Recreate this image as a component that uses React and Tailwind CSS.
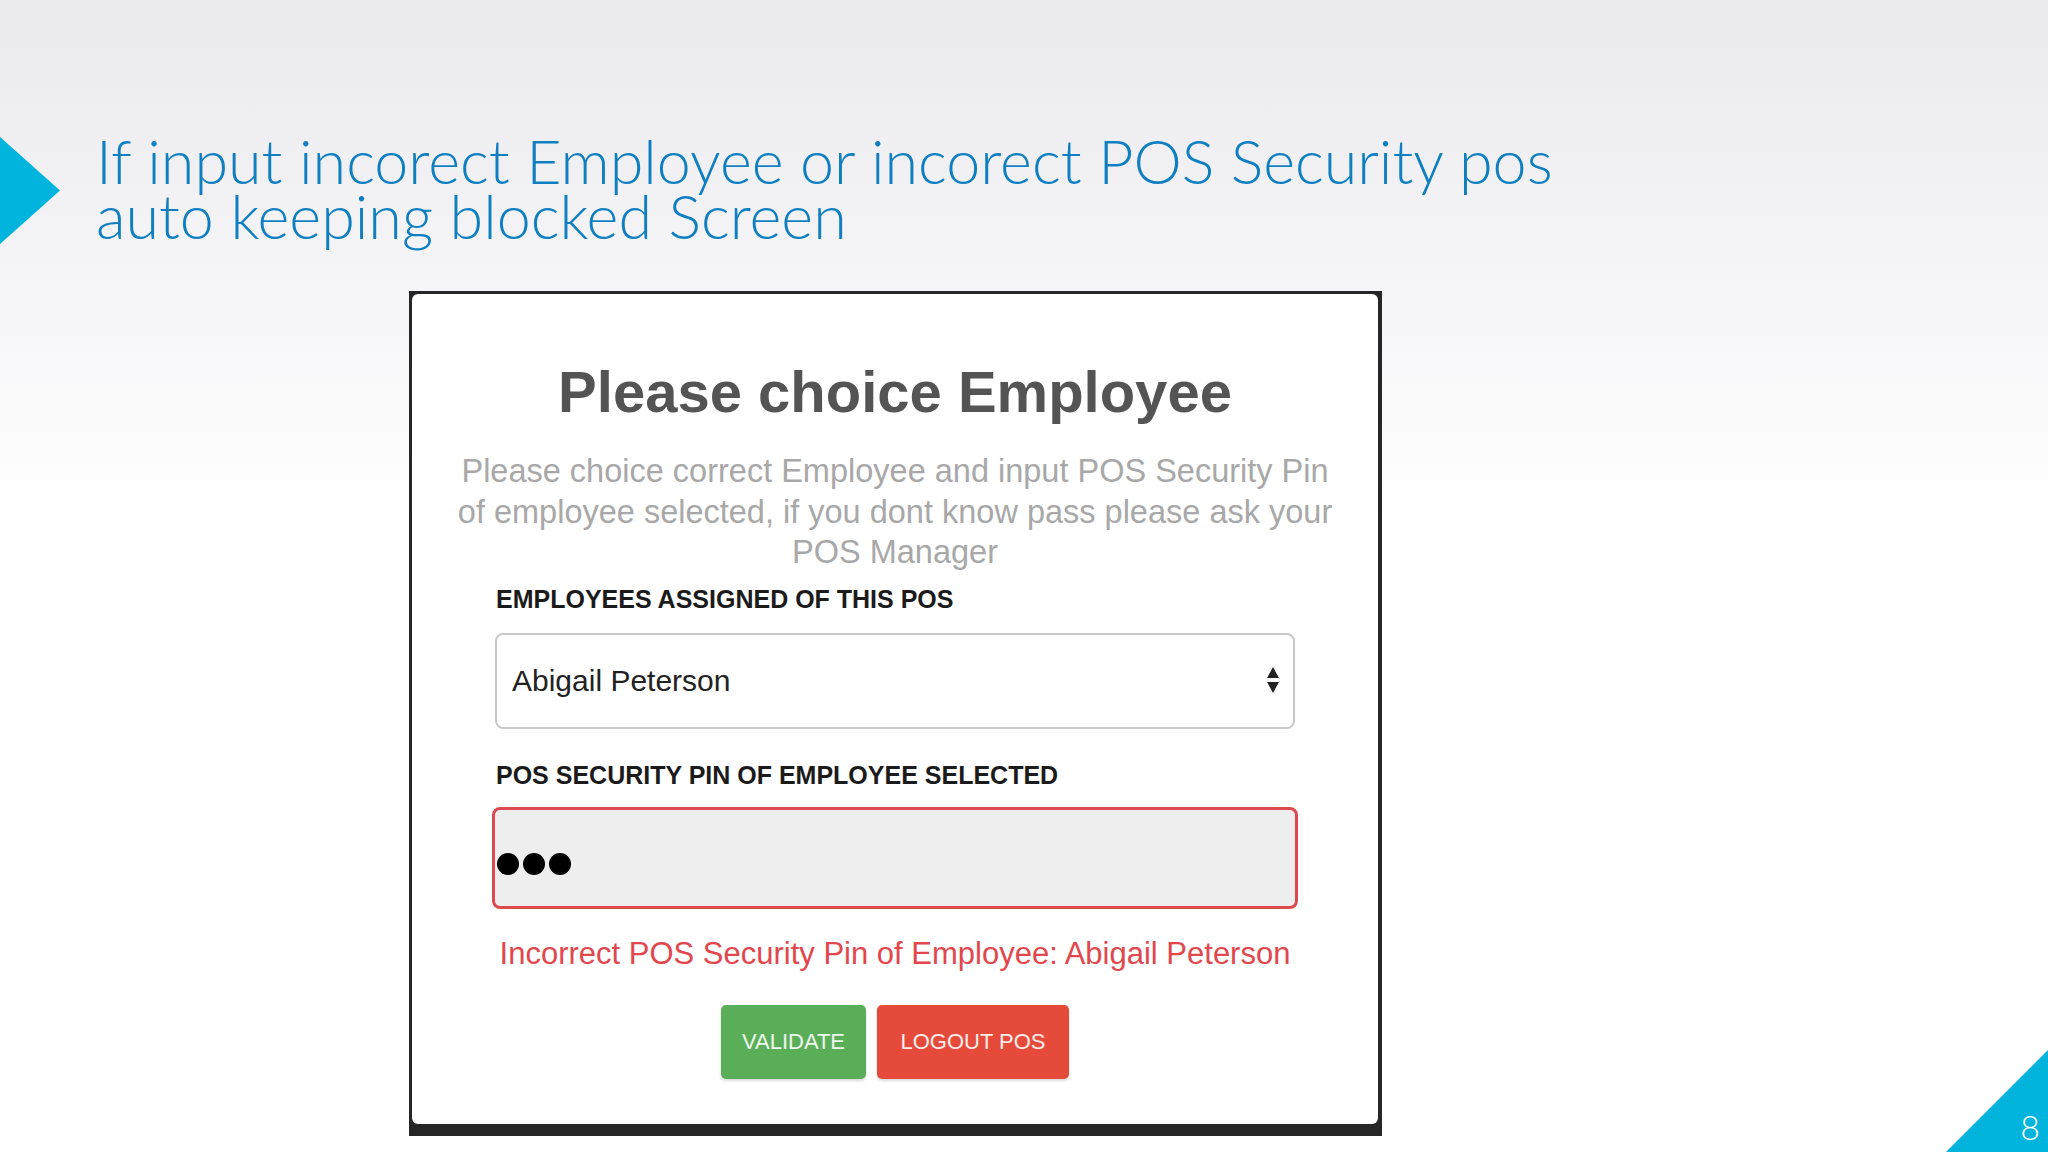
import React from 'react';

const sans = { fontFamily: '"Liberation Sans", Arial, sans-serif' };

const App = () => {
    return (
        <div className="relative h-[1152px] w-[2048px] overflow-hidden bg-linear-to-b from-[#eaeaef] via-white via-45% to-white">
            {/* Slide title */}
            <div className="flex items-center pt-[137px]">
                <svg width="60" height="107" viewBox="0 0 60 107" className="shrink-0">
                    <polygon points="0,0 60,53.5 0,107" fill="#00b4dd" />
                </svg>
                <h1 className="ml-[36px] -mt-[6px] font-['Lato',sans-serif] text-[61px] leading-[55px] font-light text-[#0f7fc1]">
                    If input incorect Employee or incorect POS Security pos
                    <br />
                    auto keeping blocked Screen
                </h1>
            </div>

            {/* Screenshot card */}
            <div className="mt-[47px] ml-[409px] w-[973px] bg-[#262626] pt-[3px] pr-[4px] pb-[12px] pl-[3px]">
                <div
                    className="flex flex-col items-center rounded-[6px] bg-white px-[83px] pt-[64px] pb-[45px]"
                    style={sans}
                >
                    <h2 className="text-[58px] leading-[67px] font-bold text-[#545454]">
                        Please choice Employee
                    </h2>
                    <p className="mt-[26px] text-center text-[32.5px] leading-[40.5px] text-[#a8a8a8] whitespace-nowrap">
                        Please choice correct Employee and input POS Security Pin
                        <br />
                        of employee selected, if you dont know pass please ask your
                        <br />
                        POS Manager
                    </p>

                    <div className="mt-[11px] w-full">
                        <p className="pl-[1px] text-[25px] leading-[30px] font-bold text-[#1b1b1b]">
                            EMPLOYEES ASSIGNED OF THIS POS
                        </p>
                        <div className="mt-[19px] flex h-[96px] items-center justify-between rounded-[8px] border-2 border-[#c9c9c9] bg-white pr-[14px] pl-[15px]">
                            <span className="text-[30px] text-[#222]">
                                Abigail Peterson
                            </span>
                            <svg width="12" height="27" viewBox="0 0 12 27">
                                <polygon points="6,0 12,11 0,11" fill="#222" />
                                <polygon points="0,15 12,15 6,26" fill="#222" />
                            </svg>
                        </div>

                        <p className="mt-[31px] pl-[1px] text-[25px] leading-[30px] font-bold text-[#1b1b1b]">
                            POS SECURITY PIN OF EMPLOYEE SELECTED
                        </p>
                        <div className="mt-[17px] -mx-[3px] flex h-[102px] items-center gap-[4px] rounded-[8px] border-[3px] border-[#dc4a4f] bg-[#eeeeee] pt-[12px] pl-[2px]">
                            <span className="h-[22px] w-[22px] rounded-full bg-black" />
                            <span className="h-[22px] w-[22px] rounded-full bg-black" />
                            <span className="h-[22px] w-[22px] rounded-full bg-black" />
                        </div>
                    </div>

                    <p className="mt-[27px] text-[31px] leading-[36px] text-[#e2474d]">
                        Incorrect POS Security Pin of Employee: Abigail Peterson
                    </p>

                    <div className="mt-[33px] flex gap-[11px]">
                        <button className="h-[74px] w-[145px] rounded-[5px] bg-[#5aae57] text-[22px] text-white/90 shadow-[0_2px_3px_rgba(0,0,0,0.15)]">
                            VALIDATE
                        </button>
                        <button className="h-[74px] w-[192px] rounded-[5px] bg-[#e54a3a] text-[22px] text-white/90 shadow-[0_2px_3px_rgba(0,0,0,0.15)]">
                            LOGOUT POS
                        </button>
                    </div>
                </div>
            </div>

            {/* Page number corner */}
            <div className="absolute right-0 bottom-0 h-[102px] w-[102px]">
                <svg width="102" height="102" viewBox="0 0 102 102" className="absolute inset-0">
                    <polygon points="102,0 102,102 0,102" fill="#00b4dd" />
                </svg>
                <span className="absolute right-[8px] bottom-[8px] font-['Lato',sans-serif] text-[34px] leading-none font-light text-white">
                    8
                </span>
            </div>
        </div>
    );
};

export default App;
